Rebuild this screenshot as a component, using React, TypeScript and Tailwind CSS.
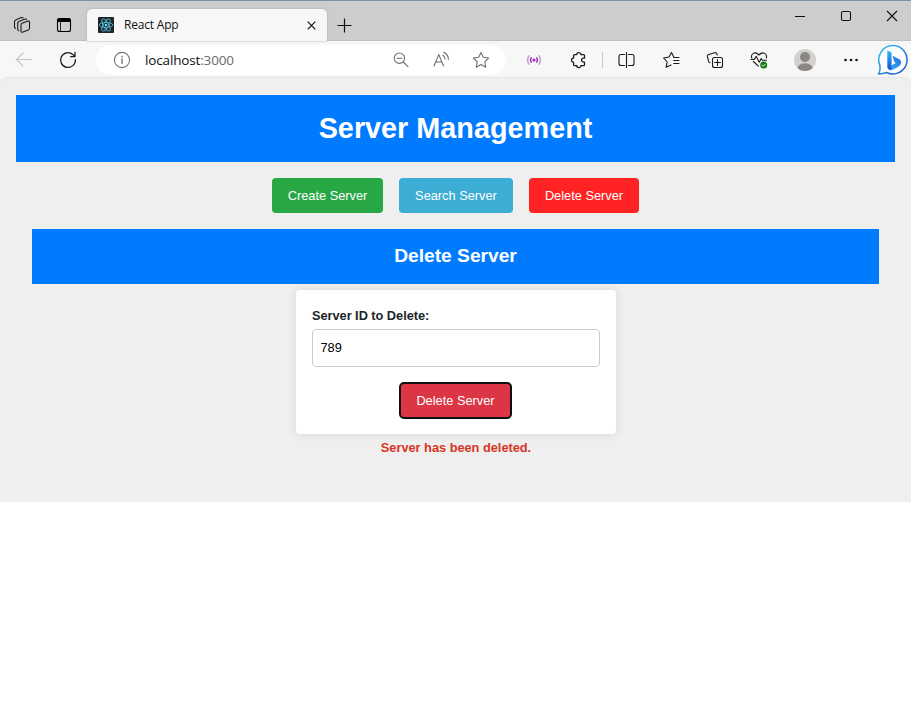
import type { ReactNode } from "react";

type IconProps = { children: ReactNode; className?: string; size?: number; sw?: number };

// Icons are drawn on a 20px grid at natural size.
function Icon({ children, className = "text-[#1a1a1a]", size = 20, sw = 1.1 }: IconProps) {
  return (
    <svg
      width={size}
      height={size}
      viewBox="0 0 20 20"
      fill="none"
      stroke="currentColor"
      strokeWidth={sw}
      strokeLinecap="round"
      strokeLinejoin="round"
      className={"shrink-0 " + className}
    >
      {children}
    </svg>
  );
}

function Cell({ children }: { children: ReactNode }) {
  return <div className="flex h-full w-11 shrink-0 items-center justify-center">{children}</div>;
}

function TitleBar() {
  return (
    <div className="flex h-[41px] border-t-[1px] border-[#7b92a5] bg-[#cdcdcd] shadow-[inset_0_-1px_0_#c0c0c0]">
      <div className="flex h-full w-11 items-center justify-center pt-2">
        <Icon>
          <path d="M10 8.2 15.8 6.1Q17.5 5.7 17.5 7.3V13.2Q17.4 14.4 16.3 14.9L10.9 17.1Q9.2 17.6 9 16V9.6Q9 8.6 10 8.2Z" />
          <path d="M6.9 15.7Q5.7 15.4 5.7 14V8.1Q5.8 6.9 6.9 6.4L12.4 4.2Q14 3.7 14.6 4.4" />
          <path d="M3.6 13.4Q2.5 13.2 2.5 12V6.7Q2.5 5.4 3.7 4.9L9.2 2.6Q10.5 2.2 11.2 2.8" />
        </Icon>
      </div>
      <div className="flex h-full w-[43px] items-center justify-center pt-2 pl-[-3px]">
        <Icon className="-mr-px -ml-1 text-black">
          <rect x="3.5" y="3.5" width="13" height="13" rx="2" />
          <path d="M4 4.7H16M4 6H16" strokeWidth="1.9" />
          <path d="M6.5 7V16" strokeWidth=".8" />
        </Icon>
      </div>
      <div className="mt-2 flex h-8 w-60 items-center rounded-t-[5px] bg-[#f7f7f7] pl-[11px] shadow-[0_0_2px_#999]">
        <svg width="16" height="16" viewBox="0 0 16 16" className="shrink-0">
          <rect width="16" height="16" rx="1" fill="#20232a" />
          <g fill="none" stroke="#4fb5ce" strokeWidth="0.9">
            <ellipse cx="8" cy="8" rx="6.8" ry="2.6" />
            <ellipse cx="8" cy="8" rx="6.8" ry="2.6" transform="rotate(60 8 8)" />
            <ellipse cx="8" cy="8" rx="6.8" ry="2.6" transform="rotate(120 8 8)" />
          </g>
          <circle cx="8" cy="8" r="1.3" fill="#61dafb" />
        </svg>
        <span className="ml-[10px] w-44 font-['Open_Sans','Noto_Sans',sans-serif] text-xs leading-4 tracking-[-0.2px] text-[#111]">
          React App
        </span>
        <svg width="20" height="20" viewBox="0 0 20 20" className="ml-[1px] shrink-0" stroke="#111" strokeWidth="1.2">
          <path d="M6.7 6.7 14.3 14.3M14.3 6.7 6.7 14.3" />
        </svg>
      </div>
      <div className="flex w-[35px] items-center justify-center pt-2">
        <svg width="15" height="15" viewBox="0 0 15 15" stroke="#111" strokeWidth="1.2">
          <path d="M7.5 .5V14.5M.5 7.5H14.5" />
        </svg>
      </div>
      <div className="ml-auto flex h-[30px] w-[134px] items-center justify-between pr-[13px] pl-[17px]">
        <svg width="12" height="12" viewBox="0 0 12 12" stroke="#111">
          <path d="M1 6.5H11" />
        </svg>
        <svg width="12" height="12" viewBox="0 0 12 12" fill="none" stroke="#111" strokeWidth="1.1">
          <rect x="1.5" y="1.5" width="9" height="9" rx="1.5" />
        </svg>
        <svg width="12" height="12" viewBox="0 0 12 12" stroke="#111" strokeWidth="1.1">
          <path d="M1 1 11 11M11 1 1 11" />
        </svg>
      </div>
    </div>
  );
}

function AddressBar() {
  return (
    <div className="ml-[3px] flex h-[30px] w-[410px] shrink-0 items-center rounded-full bg-white pl-4">
      <Icon className="text-[#757575]">
        <circle cx="10" cy="10" r="7.6" />
        <path d="M10 9V13.5" strokeWidth="1.4" />
        <path d="M10 6.6V6.7" strokeWidth="1.5" />
      </Icon>
      <div className="ml-[13px] w-[236px] shrink-0 font-['Open_Sans','Noto_Sans',sans-serif] text-[13.5px] leading-5 tracking-[-0.15px] text-[#111]">
        localhost<span className="text-[#6b6b6b]">:3000</span>
      </div>
      <div className="flex w-[120px] shrink-0 items-center">
        <div className="flex w-10 justify-center">
          <Icon className="text-[#6e6e6e]">
            <circle cx="8.4" cy="8.2" r="5.2" />
            <path d="M12.2 12 17 16.7M6 8.3H11" />
          </Icon>
        </div>
        <div className="flex w-10 justify-center">
          <Icon className="text-[#6e6e6e]">
            <path d="M3 16 7.8 4.6 12.5 16M4.6 12H11" />
            <path d="M12 5.2Q14 6.7 14 9M12.6 2.3Q17.5 4.5 17.3 9.4" />
          </Icon>
        </div>
        <div className="flex w-10 justify-center">
          <Icon className="text-[#6e6e6e]">
            <path d="M10 2.5 12.3 7.3 17.6 8 13.8 11.8 14.7 17.2 10 14.6 5.3 17.2 6.2 11.8 2.4 8 7.7 7.3Z" />
          </Icon>
        </div>
      </div>
    </div>
  );
}

function Toolbar() {
  return (
    <div className="flex h-[37px] items-center bg-[#f7f7f7]">
      <div className="flex w-[49px] justify-center">
        <Icon className="-ml-px text-[#c5c5c5]">
          <path d="M17.5 9.5H2.5M9 3 2.5 9.5 9 16" />
        </Icon>
      </div>
      <div className="flex w-11 justify-center pr-[6px]">
        <Icon sw={1.25}>
          <path d="M17.4 9.6A7.4 7.4 0 1 1 14.8 4.4L17 6.6M17 2.3V6.7H12.6" />
        </Icon>
      </div>
      <AddressBar />
      <div className="ml-[6px] flex h-full items-center">
        <Cell>
          <Icon className="text-[#9b27b0]" sw={1.5}>
            <circle cx="10" cy="10" r="1.5" fill="currentColor" stroke="none" />
            <path d="M7.2 7.8Q5.8 10 7.2 12.2M12.8 7.8Q14.2 10 12.8 12.2" />
            <path d="M4.9 5.8Q2.3 10 4.9 14.2M15.1 5.8Q17.7 10 15.1 14.2" opacity=".45" />
          </Icon>
        </Cell>
        <Cell>
          <Icon sw={1.25}>
            <path d="M6.5 4.6H8.7A2.1 2.1 0 0 1 12.9 4.6H15.6Q16.5 4.6 16.5 5.5V8.2H15.5A1.9 1.9 0 0 0 15.5 12H16.5V14.7Q16.5 15.6 15.6 15.6H12.9A2.1 2.1 0 0 1 8.7 15.6H6.5Q5.6 15.6 5.6 14.7V12.3A2.1 2.1 0 0 1 5.6 8.1V5.5Q5.6 4.6 6.5 4.6Z" />
          </Icon>
        </Cell>
        <div className="mr-px ml-[2px] h-4 w-px bg-[#c8c8c8]" />
        <Cell>
          <Icon>
            <path d="M8.5 4.5H5Q3 4.5 3 6.5V13.5Q3 15.5 5 15.5H8.5M12.5 4.5H16Q18 4.5 18 6.5V13.5Q18 15.5 16 15.5H12.5M10.5 2.5V17.5" />
          </Icon>
        </Cell>
        <div className="w-px" />
        <Cell>
          <Icon>
            <path d="M12.7 6.7 10.5 2.5 8 7 2.6 8 6.2 12 5 17.3 10 15" />
            <path d="M12.7 7.5H18M12.7 10.5H18M12.7 13.5H18" />
          </Icon>
        </Cell>
        <Cell>
          <Icon>
            <rect x="7.5" y="7.5" width="10" height="10" rx="2" />
            <path d="M12.5 9.5V15.5M9.5 12.5H15.5M5 12.8Q4 12.6 3.6 11.4L2.4 6.7Q2 5 3.7 4.5L9.6 2.7Q11.3 2.3 11.9 4L12.3 5" />
          </Icon>
        </Cell>
        <Cell>
          <Icon>
            <path d="M2.8 8C1.5 4 5.8.7 10 5 14.2.7 18.5 4 17.3 8M4.4 11.5 9.4 16.2M2 9.5H5.2L7.2 6.3 10.2 12.2 12.2 8.5 13.3 10.2H17.5" />
            <circle cx="14.7" cy="15" r="3.5" fill="#107c10" stroke="none" />
            <path d="M13.1 15.1 14.3 16.2 16.3 14" stroke="white" strokeWidth=".9" />
          </Icon>
        </Cell>
        <div className="w-[2px]" />
        <Cell>
          <svg width="22" height="22" viewBox="0 0 22 22">
            <defs>
              <clipPath id="avatar-disc">
                <circle cx="11" cy="11" r="11" />
              </clipPath>
            </defs>
            <g clipPath="url(#avatar-disc)">
              <rect width="22" height="22" fill="#d3d1ce" />
              <circle cx="11" cy="8" r="5" fill="#8b8785" />
              <path d="M3 22Q3 14.2 11 14.2T19 22Z" fill="#8b8785" />
            </g>
          </svg>
        </Cell>
        <div className="w-[2px]" />
        <Cell>
          <svg width="16" height="4" viewBox="0 0 16 4" fill="#111">
            <circle cx="2.5" cy="2" r="1.3" />
            <circle cx="8" cy="2" r="1.3" />
            <circle cx="13.5" cy="2" r="1.3" />
          </svg>
        </Cell>
        <svg width="32" height="32" viewBox="0 0 32 32" className="ml-[4px] shrink-0">
          <defs>
            <linearGradient id="bubble" x1="0" y1="0" x2="1" y2="1">
              <stop offset="0" stopColor="#35c6f4" />
              <stop offset="1" stopColor="#1b4fc4" />
            </linearGradient>
            <linearGradient id="stem" x1="0" y1="0" x2="0" y2="1">
              <stop offset="0" stopColor="#37b8f5" />
              <stop offset="1" stopColor="#1a4fd0" />
            </linearGradient>
            <linearGradient id="bowl" x1="1" y1="0" x2="0" y2="1">
              <stop offset="0" stopColor="#2b6be8" />
              <stop offset="1" stopColor="#2fb4f2" />
            </linearGradient>
          </defs>
          <path d="M16 1.6A14.2 14.2 0 1 1 9.5 28.5Q5.5 30 1.8 29.9 3.5 26.5 2.9 21.4A14.2 14.2 0 0 1 16 1.6Z" fill="white" stroke="url(#bubble)" strokeWidth="1.5" />
          <path d="M15.6 12.4Q15.6 11.8 16.5 12.2L22 15Q25.2 17 23.6 20.4 22.8 22 20 23.4L14.8 26.2Q12 27 10.8 23.5L18.8 19Q17.5 18.3 17 17Z" fill="url(#bowl)" />
          <path d="M10.3 7.3Q10.3 6.4 11.2 6.7L14 7.9Q14.6 8.2 14.6 9V24.5Q14.6 25.6 13.2 25.8 10.3 25.4 10.3 22.3Z" fill="url(#stem)" />
        </svg>
      </div>
    </div>
  );
}

function ServerPage() {
  return (
    <main className="h-[424px] rounded-t-lg bg-[#efefef] px-4 pt-[17px] font-['Liberation_Sans',Arial,sans-serif] text-[12.8px] shadow-[0_-1px_1px_#e3e3e3]">
      <h1 className="flex h-[67px] items-center justify-center bg-[#007bff] text-[28.8px] leading-[33px] font-bold text-white">
        Server Management
      </h1>
      <nav className="mt-4 flex justify-center gap-4 text-white">
        <button className="h-[35px] w-[111px] rounded bg-[#28a745]">Create Server</button>
        <button className="h-[35px] w-[114px] rounded bg-[#3cadd4]">Search Server</button>
        <button className="h-[35px] w-[110px] rounded bg-[#ff2323]">Delete Server</button>
      </nav>
      <section className="mx-4 mt-4 flex flex-col items-center">
        <h2 className="flex h-[55px] w-full items-center justify-center bg-[#007bff] text-[19.2px] font-bold text-white">
          Delete Server
        </h2>
        <form className="mt-[6px] flex h-36 w-80 flex-col items-center rounded bg-white px-4 pt-4 shadow-[0_0_10px_rgba(0,0,0,0.1)]">
          <label className="w-full pl-[0.5px] leading-[19px] font-bold tracking-[-0.04px] text-[#212529]">Server ID to Delete:</label>
          <input
            className="mt-1 h-[38px] w-full rounded border border-[#ccc] px-2 pb-[1px] text-[12.8px] text-black"
            defaultValue="789"
          />
          <button
            type="button"
            className="mt-[15px] h-[37px] w-[113px] shrink-0 rounded-[5px] border-2 border-[#101010] bg-[#dc3545] text-white"
          >
            Delete Server
          </button>
        </form>
        <p className="mt-1 pl-px leading-[19px] font-bold tracking-[-0.02px] text-[#d7351f]">Server has been deleted.</p>
      </section>
    </main>
  );
}

export default function App() {
  return (
    <div className="h-[704px] w-[911px] overflow-hidden bg-white">
      <TitleBar />
      <div className="bg-[#f7f7f7]">
        <Toolbar />
        <ServerPage />
      </div>
    </div>
  );
}
